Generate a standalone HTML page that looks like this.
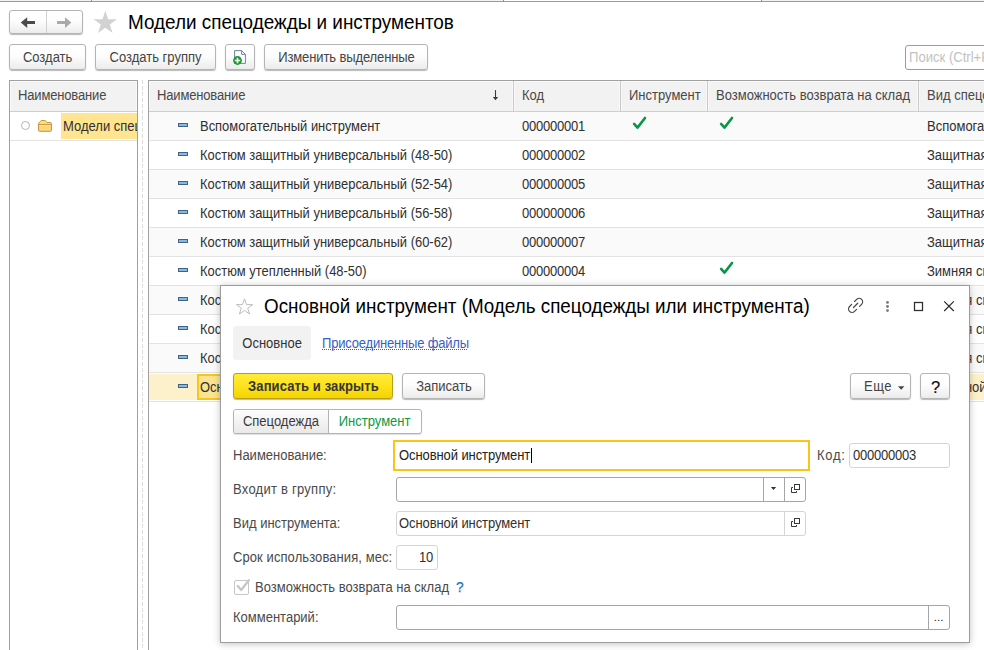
<!DOCTYPE html>
<html lang="ru"><head><meta charset="utf-8"><title>Модели спецодежды и инструментов</title>
<style>
html,body{margin:0;padding:0;background:#fff}
body{width:984px;height:650px;position:relative;overflow:hidden;font-family:"Liberation Sans",sans-serif;font-size:13px;color:#303030}
*{box-sizing:border-box}
.a{position:absolute;white-space:nowrap}
.t,.tc,.tr,.hd,.lbl,.row span{font-size:14px;transform:scaleX(.9286);transform-origin:0 50%}
.t,.tc,.tr{display:inline-block;white-space:nowrap;line-height:inherit;vertical-align:top}
.tc{transform-origin:50% 50%}
.tr{transform-origin:100% 50%}
.btn{position:absolute;height:26px;border:1px solid #b4b4b4;border-radius:3px;background:linear-gradient(#fff 0%,#fdfdfd 45%,#ececec 100%);box-shadow:0 1px 1px rgba(0,0,0,.28);text-align:center;line-height:24px;color:#444;white-space:nowrap}
.hd{position:absolute;white-space:nowrap;top:80px;height:30px;line-height:30px;color:#484848}
.sep{position:absolute;top:81px;width:3px;height:30px;margin-left:-1px;background:linear-gradient(90deg,#f9f9f9 0 1px,#c9c9c9 1px 2px,#f9f9f9 2px 3px)}
.row{position:absolute;left:149px;width:835px;height:29px;border-bottom:1px solid #e3e3e3;line-height:28px}
.row.o{background:#fafafa}
.row span{position:absolute;top:0;white-space:nowrap}
.ic{position:absolute;left:29px;top:11px;width:10px;height:4px;background:#86b9e4;border:1px solid #406385;box-shadow:0 0 0 1px rgba(255,255,255,.9)}
.sel .ic{box-shadow:none}
.row .n{left:51.4px;transform:scaleX(.9245)}.c{left:372.6px;letter-spacing:-.25px}.v{left:778px}
.fld{position:absolute;white-space:nowrap;overflow:hidden;height:25px;border:1px solid #a6a6a6;border-radius:3px;background:#fff;line-height:23px}
.fld.l{border-color:#d4d4d4}
.lbl{position:absolute;left:233px;line-height:25px;color:#4a4a4a;white-space:nowrap}
</style></head><body>

<!-- top strip -->
<div class="a" style="left:0;top:0;width:984px;height:2px;border-bottom:1px solid #9a9a9a;background:#fff"></div>
<div class="a" style="left:0;top:0;width:503px;height:1px;background:#f4f4f4"></div>
<div class="a" style="left:91px;top:0;width:1px;height:2px;background:#8e8e8e"></div>
<div class="a" style="left:503px;top:0;width:1px;height:2px;background:#8e8e8e"></div>
<div class="a" style="left:761px;top:0;width:1px;height:2px;background:#8e8e8e"></div>
<div class="a" style="left:762px;top:0;width:222px;height:1px;background:#f4f4f4"></div>

<!-- nav -->
<div class="btn" style="left:9px;top:10px;width:74px;height:24px"></div>
<div class="a" style="left:46px;top:11px;width:1px;height:22px;background:#d0d0d0"></div>
<svg class="a" style="left:9px;top:10px" width="74" height="24" viewBox="0 0 74 24">
<path d="M11.8 12.6 L18.2 7.3 L18.2 11.1 L26 11.1 L26 14.1 L18.2 14.1 L18.2 17.9 Z" fill="#4a4a4a"/>
<path d="M62.4 12.6 L56 7.3 L56 11.1 L48 11.1 L48 14.1 L56 14.1 L56 17.9 Z" fill="#a9a9a9"/>
</svg>
<svg class="a" style="left:93px;top:10px" width="25" height="24" viewBox="0 0 25 24"><path d="M12.3 0.8 L15.1 9.3 L24 9.3 L16.8 14.5 L19.6 23 L12.3 17.7 L5 23 L7.8 14.5 L0.6 9.3 L9.5 9.3 Z" fill="#d2d2d2"/></svg>
<div class="a" style="left:127.5px;top:10px;font-size:19.6px;transform:scaleX(.9645);transform-origin:0 50%;line-height:24px;color:#000">Модели спецодежды и инструментов</div>

<!-- toolbar -->
<div class="btn" style="left:9px;top:44px;width:77px"><span class="tc">Создать</span></div>
<div class="btn" style="left:95px;top:44px;width:121px"><span class="tc">Создать группу</span></div>
<div class="btn" style="left:225px;top:44px;width:30px"></div>
<svg class="a" style="left:231px;top:48px" width="18" height="18" viewBox="0 0 18 18">
<path d="M3.6 2.6 H10.6 L14.4 6.4 V15.4 H3.6 Z" fill="#fff" stroke="#6b84a3" stroke-width="1"/>
<path d="M10.6 2.6 V6.4 H14.4" fill="none" stroke="#6b84a3" stroke-width="1"/>
<circle cx="6.5" cy="12.5" r="4.4" fill="#1a9a2e"/>
<path d="M6.5 9.8 V15.2 M3.8 12.5 H9.2" stroke="#fff" stroke-width="1.6"/>
</svg>
<div class="btn" style="left:264px;top:44px;width:164px"><span class="tc" style="letter-spacing:-.13px">Изменить выделенные</span></div>
<div class="fld" style="left:905px;top:45px;width:90px;border-color:#9c9c9c;color:#c2c2c2;padding-left:3px"><span class="t" style="font-size:14.1px">Поиск (Ctrl+F)</span></div>

<!-- left tree panel -->
<div class="a" style="left:9px;top:80px;width:129px;height:580px;border:1px solid #a0a0a0;background:#fff"></div>
<div class="a" style="left:10px;top:81px;width:127px;height:31px;background:#f2f2f2;border-bottom:1px solid #cfcfcf;box-shadow:inset 1px 1px 0 #fafafa,inset -1px 0 0 #fafafa"></div>
<div class="hd" style="left:18px;letter-spacing:-.17px">Наименование</div>
<div class="a" style="left:10px;top:140px;width:127px;height:1px;background:#e3e3e3"></div>
<div class="a" style="left:61px;top:113px;width:76px;height:26px;background:#ffe591;overflow:hidden;line-height:26px;padding-left:2px"><span class="t">Модели спецодежды</span></div>
<svg class="a" style="left:20px;top:120px" width="11" height="11" viewBox="0 0 11 11"><circle cx="5.5" cy="5.5" r="4" fill="#fff" stroke="#b4b4b4" stroke-width="1"/></svg>
<svg class="a" style="left:37px;top:119px" width="16" height="14" viewBox="0 0 16 14">
<path d="M1.6 4.3 L4.1 1.6 H8.3 L9.9 3.6 H13.4 Q14.4 3.6 14.4 4.6 V11.3 Q14.4 12.3 13.4 12.3 H2.6 Q1.6 12.3 1.6 11.3 Z" fill="#f8da7a" stroke="#c98c3c" stroke-width="1" stroke-linejoin="round"/>
<path d="M2.1 4.4 L4.3 2.1 H8.1 L9.7 4.1 H13.9 V5 H2.1 Z" fill="#fee66c"/>
<path d="M1.6 5.4 H14.4" stroke="#c98c3c" stroke-width="1"/>
<path d="M2.2 6.4 H13.8" stroke="#fbe595" stroke-width="1"/>
</svg>

<!-- splitter -->
<div class="a" style="left:142px;top:80px;width:1px;height:570px;background:repeating-linear-gradient(#dcdcdc 0 4px,#fff 4px 6px)"></div>

<!-- right table panel -->
<div class="a" style="left:148px;top:80px;width:850px;height:580px;border:1px solid #a0a0a0;background:#fff"></div>
<div class="a" style="left:149px;top:81px;width:835px;height:31px;background:#f2f2f2;border-bottom:1px solid #cfcfcf;box-shadow:inset 1px 1px 0 #fafafa"></div>
<div class="hd" style="left:157px;letter-spacing:-.17px">Наименование</div>
<svg class="a" style="left:490px;top:89px" width="12" height="13" viewBox="0 0 12 13"><path d="M5.5 1.1 V9" fill="none" stroke="#3a3a3a" stroke-width="1.1"/><path d="M2.8 7.9 H8.2 L5.5 11.2 Z" fill="#3a3a3a"/></svg>
<div class="sep" style="left:513px"></div>
<div class="hd" style="left:522px">Код</div>
<div class="sep" style="left:620px"></div>
<div class="hd" style="left:629px">Инструмент</div>
<div class="sep" style="left:707px"></div>
<div class="hd" style="left:716px">Возможность возврата на склад</div>
<div class="sep" style="left:918px"></div>
<div class="hd" style="left:927px">Вид спецодежды</div>

<div class="row o" style="top:112px"><i class="ic"></i><span class="n">Вспомогательный инструмент</span><span class="c">000000001</span><span class="v">Вспомогательный инструмент</span>
<svg class="a" style="left:483px;top:4px" width="16" height="16" viewBox="0 0 16 16"><path d="M2.1 7.9 L5.5 11.6 L13 2" fill="none" stroke="#089648" stroke-width="2.6" stroke-linecap="round" stroke-linejoin="round"/></svg>
<svg class="a" style="left:570px;top:4px" width="16" height="16" viewBox="0 0 16 16"><path d="M2.1 7.9 L5.5 11.6 L13 2" fill="none" stroke="#089648" stroke-width="2.6" stroke-linecap="round" stroke-linejoin="round"/></svg></div>
<div class="row" style="top:141px"><i class="ic"></i><span class="n">Костюм защитный универсальный (48-50)</span><span class="c">000000002</span><span class="v">Защитная спецодежда</span></div>
<div class="row o" style="top:170px"><i class="ic"></i><span class="n">Костюм защитный универсальный (52-54)</span><span class="c">000000005</span><span class="v">Защитная спецодежда</span></div>
<div class="row" style="top:199px"><i class="ic"></i><span class="n">Костюм защитный универсальный (56-58)</span><span class="c">000000006</span><span class="v">Защитная спецодежда</span></div>
<div class="row o" style="top:228px"><i class="ic"></i><span class="n">Костюм защитный универсальный (60-62)</span><span class="c">000000007</span><span class="v">Защитная спецодежда</span></div>
<div class="row" style="top:257px"><i class="ic"></i><span class="n">Костюм утепленный (48-50)</span><span class="c">000000004</span><span class="v">Зимняя спецодежда</span>
<svg class="a" style="left:570px;top:4px" width="16" height="16" viewBox="0 0 16 16"><path d="M2.1 7.9 L5.5 11.6 L13 2" fill="none" stroke="#089648" stroke-width="2.6" stroke-linecap="round" stroke-linejoin="round"/></svg></div>
<div class="row o" style="top:286px"><i class="ic"></i><span class="n">Костюм утепленный (52-54)</span><span class="c">000000008</span><span class="v">Зимняя спецодежда</span></div>
<div class="row" style="top:315px"><i class="ic"></i><span class="n">Костюм утепленный (56-58)</span><span class="c">000000009</span><span class="v">Зимняя спецодежда</span></div>
<div class="row o" style="top:344px"><i class="ic"></i><span class="n">Костюм утепленный (60-62)</span><span class="c">000000010</span><span class="v">Зимняя спецодежда</span></div>
<div class="row sel" style="top:373px"><div class="a" style="left:0;top:1px;width:835px;height:26px;background:#fdf1cb"></div><div class="a" style="left:48px;top:1px;width:320px;height:26px;background:#fbe391;border:2px solid #f5c61c"></div><i class="ic"></i><span class="n">Основной инструмент</span><span class="c">000000003</span><span class="v">Основной инструмент</span></div>

<!-- dialog -->
<div class="a" style="left:220px;top:285px;width:750px;height:358px;background:#fff;border:1px solid #9c9c9c;box-shadow:0 1px 7px rgba(0,0,0,.24)"></div>
<svg class="a" style="left:235px;top:297px" width="19" height="18" viewBox="0 0 19 18"><path d="M9.5 1.8 L11.5 7.6 L17.6 7.6 L12.7 11.2 L14.6 17 L9.5 13.4 L4.4 17 L6.3 11.2 L1.4 7.6 L7.5 7.6 Z" fill="#fff" stroke="#bdbdbd" stroke-width="1"/></svg>
<div class="a" style="left:264px;top:294px;font-size:19.6px;transform:scaleX(.961);transform-origin:0 50%;line-height:24px;color:#000">Основной инструмент (Модель спецодежды или инструмента)</div>
<svg class="a" style="left:846px;top:296px" width="19" height="19" viewBox="0 0 19 19" fill="none" stroke="#4a4a4a" stroke-width="1.25" stroke-linecap="round">
<g transform="translate(9.6 9.4) rotate(-45)"><path d="M-2.1 -3.5 H-5 A3.5 3.5 0 0 0 -5 3.5 H-2.1 M2.1 -3.5 H5 A3.5 3.5 0 0 1 5 3.5 H2.1 M-3 0 H3"/></g></svg>
<svg class="a" style="left:884px;top:299px" width="7" height="15" viewBox="0 0 7 15" fill="#777"><circle cx="3.5" cy="3.4" r="1.4"/><circle cx="3.5" cy="7.5" r="1.4"/><circle cx="3.5" cy="11.6" r="1.4"/></svg>
<svg class="a" style="left:912px;top:300px" width="13" height="13" viewBox="0 0 13 13"><rect x="2.5" y="2.5" width="8" height="8" fill="none" stroke="#2d2d2d" stroke-width="1.25"/></svg>
<svg class="a" style="left:943px;top:300px" width="12" height="12" viewBox="0 0 12 12"><path d="M1.2 1.4 L10.8 11 M10.8 1.4 L1.2 11" stroke="#2d2d2d" stroke-width="1.2"/></svg>

<div class="a" style="left:233px;top:326px;width:78px;height:34px;background:#f2f2f2;border-radius:4px;line-height:34px;text-align:center;color:#333"><span class="tc">Основное</span></div>
<div class="a" style="left:322px;top:335px;line-height:16px;color:#3561c2;border-bottom:1px dotted #3561c2;height:15px;width:145px"><span class="t" style="letter-spacing:-.2px">Присоединенные файлы</span></div>

<div class="btn" style="left:233px;top:373px;width:160px;font-weight:bold;background:linear-gradient(#ffeb38 0%,#fde21c 50%,#f4d300 100%);border-color:#b9a016;color:#353535"><span class="tc" style="letter-spacing:.12px">Записать и закрыть</span></div>
<div class="btn" style="left:402px;top:373px;width:83px"><span class="tc">Записать</span></div>
<div class="btn" style="left:850px;top:373px;width:61px;text-align:left;padding-left:12.5px;"><span class="t" style="letter-spacing:.5px">Еще</span></div>
<svg class="a" style="left:897px;top:385px" width="9" height="6" viewBox="0 0 9 6"><path d="M1 1.2 H7.4 L4.2 4.7 Z" fill="#444"/></svg>
<div class="btn" style="left:920px;top:373px;width:30px;color:#111;line-height:27px"><span class="tc" style="font-size:16.5px;transform:none;-webkit-text-stroke:.2px #111;padding-left:1px">?</span></div>

<div class="btn" style="left:233px;top:409px;width:189px;height:25px;background:#fff;box-shadow:0 1px 1px rgba(0,0,0,.13)"></div>
<div class="a" style="left:234px;top:410px;width:95px;height:23px;border-right:1px solid #b4b4b4;border-radius:2px 0 0 2px;background:linear-gradient(#fdfdfd,#e9e9e9);text-align:center;line-height:23px;color:#3a3a3a"><span class="tc">Спецодежда</span></div>
<div class="a" style="left:329px;top:410px;width:92px;height:23px;text-align:center;line-height:23px;color:#0a9a48"><span class="tc">Инструмент</span></div>

<div class="lbl" style="top:443px">Наименование:</div>
<div class="a" style="left:393px;top:440px;width:417px;height:31px;border:2px solid #fac516;background:#fff;line-height:27px;padding-left:4.2px;color:#222"><span class="t" style="letter-spacing:-.1px">Основной инструмент</span><span style="position:absolute;left:136px;top:6px;width:1px;height:15px;background:#000"></span></div>
<div class="lbl" style="left:817px;top:443px;letter-spacing:.75px">Код:</div>
<div class="fld l" style="left:849px;top:443px;width:101px;padding-left:3px"><span class="t" style="letter-spacing:-.25px">000000003</span></div>

<div class="lbl" style="top:477px;letter-spacing:.27px">Входит в группу:</div>
<div class="fld" style="left:396px;top:477px;width:410px"></div>
<div class="a" style="left:763px;top:478px;width:1px;height:23px;background:#a6a6a6"></div>
<div class="a" style="left:784px;top:478px;width:1px;height:23px;background:#a6a6a6"></div>
<svg class="a" style="left:769px;top:486px" width="9" height="5" viewBox="0 0 9 5"><path d="M1.9 1 H7.1 L4.5 4 Z" fill="#333"/></svg>
<svg class="a" style="left:790px;top:483px" width="12" height="12" viewBox="0 0 12 12" fill="none" stroke="#383838" stroke-width="1"><rect x="4.5" y="1.5" width="5" height="5"/><path d="M3 4.5 H1.5 V9.5 H6.5 V8"/></svg>

<div class="lbl" style="top:511px">Вид инструмента:</div>
<div class="fld l" style="left:396px;top:511px;width:410px;padding-left:2.2px"><span class="t" style="letter-spacing:-.1px">Основной инструмент</span></div>
<div class="a" style="left:784px;top:512px;width:1px;height:23px;background:#d4d4d4"></div>
<svg class="a" style="left:790px;top:517px" width="12" height="12" viewBox="0 0 12 12" fill="none" stroke="#383838" stroke-width="1"><rect x="4.5" y="1.5" width="5" height="5"/><path d="M3 4.5 H1.5 V9.5 H6.5 V8"/></svg>

<div class="lbl" style="top:545px;letter-spacing:.09px">Срок использования, мес:</div>
<div class="fld l" style="left:396px;top:545px;width:42px;text-align:right;padding-right:4px"><span class="tr" style="letter-spacing:-.25px">10</span></div>

<div class="a" style="left:234px;top:580px;width:15px;height:15px;border:1px solid #c6c6c6;border-radius:2px;background:#fff"></div>
<svg class="a" style="left:234px;top:577px" width="18" height="18" viewBox="0 0 18 18"><path d="M3.8 9 L7.2 13 L14.8 3.2" fill="none" stroke="#c6c6c6" stroke-width="2.3" stroke-linecap="round" stroke-linejoin="round"/></svg>
<div class="lbl" style="left:255px;top:575px">Возможность возврата на склад</div>
<div class="a" style="left:456px;top:575px;line-height:25px;color:#1b73b8"><span class="t" style="transform:none;font-size:13.8px;-webkit-text-stroke:.25px #1b73b8">?</span></div>

<div class="lbl" style="top:605px">Комментарий:</div>
<div class="fld" style="left:396px;top:605px;width:554px"></div>
<div class="a" style="left:928px;top:606px;width:1px;height:23px;background:#a6a6a6"></div>
<div class="a" style="left:933.8px;top:605px;line-height:25px;color:#222;font-size:11.5px">...</div>

</body></html>
